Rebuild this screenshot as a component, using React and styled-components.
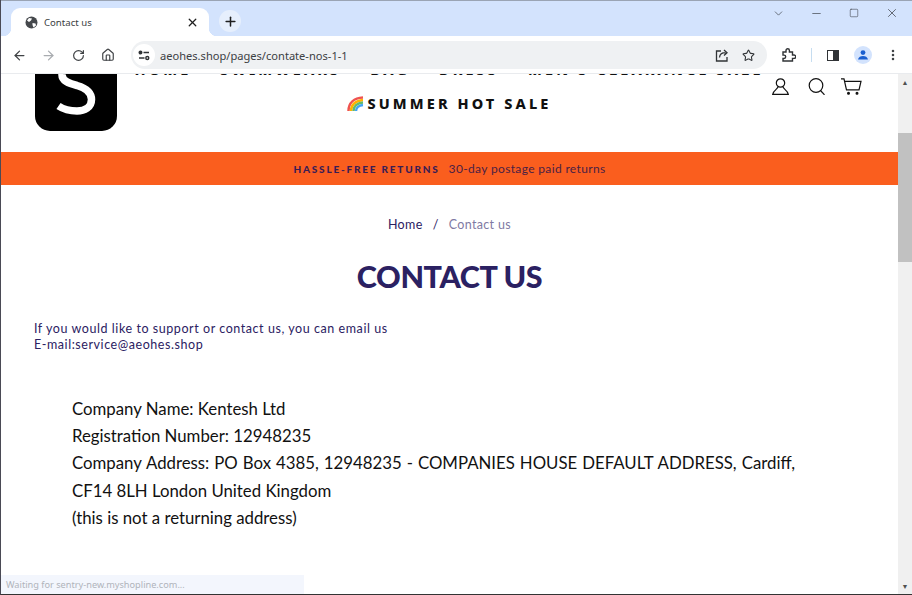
import React from "react"
import styled, { createGlobalStyle } from "styled-components"
import { ArrowLeft, ArrowRight, RotateCw, Home, X, Plus, ChevronDown, Minus, Square, Star, MoreVertical } from "lucide-react"

const ink = "#2b2162"
const siteFont = `Lato, "Noto Sans", sans-serif`

const GlobalStyle = createGlobalStyle`
  html, body {
    margin: 0;
    padding: 0;
    height: 100%;
    overflow: hidden;
    background: #fff;
  }
  #root {
    height: 100%;
  }
`

const Window = styled.div`
  position: relative;
  width: 912px;
  height: 595px;
  box-sizing: border-box;
  display: flex;
  flex-direction: column;
  border-left: 1px solid #4a4a55;
  border-bottom: 1px solid #333;
  overflow: hidden;
  font-family: "Noto Sans", sans-serif;
`

const TitleBar = styled.div`
  height: 36px;
  flex: none;
  display: flex;
  align-items: flex-end;
  background: #d3e3fd;
  border-top: 1px solid #9aa4b4;
  box-sizing: border-box;
  padding-left: 10px;
`

const Tab = styled.div`
  position: relative;
  width: 198px;
  height: 28px;
  box-sizing: border-box;
  background: #fff;
  border-radius: 9px 9px 0 0;
  display: flex;
  align-items: center;
  padding: 0 10px 0 14px;
  font-size: 9.6px;
  color: #3c4043;

  &::before,
  &::after {
    content: "";
    position: absolute;
    bottom: 0;
    width: 8px;
    height: 8px;
  }
  &::before {
    left: -8px;
    background: radial-gradient(circle at 0 0, #d3e3fd 8px, #fff 8.5px);
  }
  &::after {
    right: -8px;
    background: radial-gradient(circle at 100% 0, #d3e3fd 8px, #fff 8.5px);
  }
`

const TabTitle = styled.span`
  flex: 1;
  margin-left: 6px;
`

const NewTab = styled.div`
  width: 22px;
  height: 22px;
  margin: 0 0 4px 10px;
  border-radius: 50%;
  background: #e6effd;
  display: flex;
  align-items: center;
  justify-content: center;
  color: #1f1f1f;
`

const WindowControls = styled.div`
  margin-left: auto;
  align-self: flex-start;
  display: flex;
  align-items: center;
  height: 24px;
  padding-right: 1px;
  color: #3f444b;
`

const WindowButton = styled.div`
  width: 38px;
  display: flex;
  justify-content: center;
`

const Toolbar = styled.div`
  height: 38px;
  flex: none;
  box-sizing: border-box;
  display: flex;
  align-items: center;
  background: #fff;
  border-bottom: 1px solid #e9ebee;
  padding: 1px 0 0 6px;
  color: #444746;
`

const NavIcon = styled.div`
  width: ${(p) => p.$w}px;
  display: flex;
  justify-content: center;
  color: ${(p) => (p.$muted ? "#a9acb0" : "#3f4245")};
`

const Omnibox = styled.div`
  width: 636px;
  height: 28px;
  margin-left: 6px;
  padding: 0 5px 0 2px;
  box-sizing: border-box;
  border-radius: 14px;
  background: #eff1f3;
  display: flex;
  align-items: center;
  color: #3c4043;
`

const SiteInfo = styled.div`
  width: 22px;
  height: 22px;
  margin-right: 5px;
  border-radius: 50%;
  background: #fff;
  display: flex;
  align-items: center;
  justify-content: center;
`

const Url = styled.span`
  flex: 1;
  font-size: 11.1px;
`

const OmniIcon = styled.div`
  width: 27px;
  display: flex;
  justify-content: center;
  color: #303336;
`

const Divider = styled.div`
  width: 1px;
  height: 14px;
  background: #c6ddf0;
  margin-right: 10px;
`

const SidePanelIcon = styled.div`
  width: 12px;
  height: 11px;
  box-sizing: border-box;
  border: 1.5px solid #303336;
  background: linear-gradient(90deg, #fff 50%, #303336 50%);
`

const Avatar = styled.div`
  width: 18px;
  height: 18px;
  border-radius: 50%;
  background: #d3e3fd;
  display: flex;
  align-items: center;
  justify-content: center;
`

const Viewport = styled.div`
  flex: 1;
  min-height: 0;
  display: flex;
`

const Page = styled.main`
  flex: 1;
  min-width: 0;
  overflow: hidden;
  background: #fff;
  font-family: ${siteFont};
  color: ${ink};
`

const Header = styled.header`
  height: 78px;
  display: grid;
  grid-template-columns: 34px 82px 1fr 126px;
  align-items: start;
`

const Logo = styled.div`
  grid-column: 2;
  width: 82px;
  height: 57px;
  background: #000;
  border-radius: 0 0 15px 15px;
  color: #fff;
  display: flex;
  justify-content: center;
`

const Menu = styled.nav`
  grid-column: 3;
  display: flex;
  flex-direction: column;
  align-items: center;
  color: #111;
  font-family: "Noto Sans", sans-serif;
  font-weight: 800;
  font-size: 14.5px;
  letter-spacing: 3.1px;
  margin: -22px 0 0 9px;
`

const MenuRow = styled.div`
  display: flex;
  gap: 29px;
  height: 34px;
  white-space: nowrap;
  align-items: center;
`

const Rainbow = styled.svg`
  margin-right: 4px;
  vertical-align: -2px;
`

const HeaderIcons = styled.div`
  grid-column: 4;
  display: flex;
  gap: 19px;
  margin-top: 4px;
  color: #111;
`

const CartIcon = styled.svg`
  margin-left: -3px;
`

const Banner = styled.div`
  height: 33px;
  background: #fa5e1e;
  display: flex;
  align-items: center;
  justify-content: center;
  font-size: 12px;
  letter-spacing: 0.35px;
  color: #4a2145;
`

const BannerStrong = styled.strong`
  font-size: 10px;
  font-weight: 900;
  letter-spacing: 1.8px;
  margin-right: 9px;
  color: #3a1d55;
`

const Crumbs = styled.div`
  margin-top: 32px;
  text-align: center;
  font-size: 12.5px;
  letter-spacing: 0.35px;
  line-height: 16px;
`

const CrumbSep = styled.span`
  margin: 0 10px;
`

const CrumbCurrent = styled.span`
  color: #7f7aa3;
`

const Title = styled.h1`
  margin: 23px 0 0;
  text-align: center;
  font-size: 30.5px;
  line-height: 40px;
  font-weight: 900;
  letter-spacing: -0.4px;
  color: ${ink};
`

const Intro = styled.p`
  margin: 25px 0 0 33px;
  font-size: 12.5px;
  line-height: 16px;
  letter-spacing: 0.56px;
`

const Company = styled.div`
  margin: 42px 103px 0 71px;
  font-size: 16.8px;
  line-height: 27.2px;
  color: #111;
`

const Justified = styled.div`
  text-align: justify;
`

const ScrollBar = styled.div`
  width: 14px;
  flex: none;
  background: #f0f0f0;
  display: flex;
  flex-direction: column;
  align-items: center;
`

const Arrow = styled.div`
  height: 16px;
  display: flex;
  align-items: center;
  justify-content: center;
  font-size: 7px;
  color: #505050;
`

const Track = styled.div`
  flex: 1;
  width: 100%;
  padding-top: 43px;
`

const Thumb = styled.div`
  height: 129px;
  background: #c1c1c1;
`

const Status = styled.div`
  position: absolute;
  left: 0;
  bottom: 0;
  width: 303px;
  height: 19px;
  background: #f3f6fd;
  padding-left: 5px;
  box-sizing: border-box;
  display: flex;
  align-items: center;
  font-size: 9.2px;
  color: #b0b4bb;
`

const App = () => {
  return (
    <>
      <GlobalStyle />
      <Window>
        <TitleBar>
          <Tab>
            <svg width="13" height="13" viewBox="0 0 13 13">
              <circle cx="6.500" cy="6.500" r="6" fill="#45484c" />
              <path d="M2 4.500l2-2.500 3 .5-1 2-2 1.500zM7.500 7l3 .5.500 2-2.500 2-1-2.500z" fill="#fff" />
            </svg>
            <TabTitle>Contact us</TabTitle>
            <X size={13} color="#1f1f1f" strokeWidth={2.4} />
          </Tab>
          <NewTab>
            <Plus size={15} strokeWidth={2.4} />
          </NewTab>
          <WindowControls>
            <WindowButton>
              <ChevronDown size={13} strokeWidth={1.3} />
            </WindowButton>
            <WindowButton>
              <Minus size={13} strokeWidth={1.3} />
            </WindowButton>
            <WindowButton>
              <Square size={10} strokeWidth={1.4} />
            </WindowButton>
            <WindowButton>
              <X size={14} strokeWidth={1.3} />
            </WindowButton>
          </WindowControls>
        </TitleBar>
        <Toolbar>
          <NavIcon $w={24}>
            <ArrowLeft size={15} />
          </NavIcon>
          <NavIcon $w={34} $muted>
            <ArrowRight size={15} />
          </NavIcon>
          <NavIcon $w={26}>
            <RotateCw size={13} strokeWidth={2.2} />
          </NavIcon>
          <NavIcon $w={34}>
            <Home size={14} />
          </NavIcon>
          <Omnibox>
            <SiteInfo>
              <svg width="12" height="11" viewBox="0 0 12 11" fill="none" stroke="#303336" strokeWidth="1.400">
                <circle cx="2.500" cy="2.500" r="1.300" fill="#303336" />
                <path d="M5.500 2.500H11M1 8h5.500" />
                <circle cx="9.300" cy="8" r="1.500" />
              </svg>
            </SiteInfo>
            <Url>aeohes.shop/pages/contate-nos-1-1</Url>
            <OmniIcon>
              <svg width="14" height="13" viewBox="0 0 14 13" fill="none" stroke="currentColor" strokeWidth="1.300">
                <path d="M6 2H1.500v10H12V8" />
                <path d="M4.500 8.500c.3-3 2.500-4.800 6-4.800M9 1l3 2.700-3 2.700" />
              </svg>
            </OmniIcon>
            <OmniIcon>
              <Star size={13} strokeWidth={2} />
            </OmniIcon>
          </Omnibox>
          <NavIcon $w={44}>
            <svg width="14" height="14" viewBox="0 0 14 14" fill="none" stroke="#303336" strokeWidth="1.400">
              <path d="M1 4h3V2.500a1.700 1.700 0 0 1 3.400 0V4h3.100v3H12a1.700 1.700 0 0 1 0 3.400h-1.500V13H1v-2.500h1a1.700 1.700 0 0 0 0-3.400H1z" />
            </svg>
          </NavIcon>
          <Divider />
          <NavIcon $w={22}>
            <SidePanelIcon />
          </NavIcon>
          <NavIcon $w={38}>
            <Avatar>
              <svg width="12" height="12" viewBox="0 0 12 12">
                <circle cx="6" cy="3.600" r="2.400" fill="#1a5fd0" />
                <path d="M1 10.500c.5-2.600 2.600-3.600 5-3.600s4.500 1 5 3.600z" fill="#1a5fd0" />
              </svg>
            </Avatar>
          </NavIcon>
          <NavIcon $w={22}>
            <MoreVertical size={14} strokeWidth={2.4} />
          </NavIcon>
        </Toolbar>
        <Viewport>
          <Page>
            <Header>
              <Logo>
                <svg width="46" height="46" viewBox="0 0 46 46">
                  <path
                    d="M9 0c-.5 7 7 9.500 15 11.500c9 2.600 14.500 6.500 14.500 14c0 8-7 11.500-14.500 11.500c-6 0-14-2-18.500-5"
                    fill="none"
                    stroke="#fff"
                    strokeWidth="7.500"
                  />
                </svg>
              </Logo>
              <Menu>
                <MenuRow>
                  <span>HOME</span>
                  <span>SWIMWEARS</span>
                  <span>BAG</span>
                  <span>DRESS</span>
                  <span>MEN'S CLEARANCE SALE</span>
                </MenuRow>
                <MenuRow>
                  <span>
                    <Rainbow width="17" height="15" viewBox="0 0 17 15">
                      <path d="M1.500 15C1.500 7 7 2 16 1.500" fill="none" stroke="#ef5350" strokeWidth="2.500" />
                      <path d="M4 15C4 9 8.500 4.500 16 4" fill="none" stroke="#ffb300" strokeWidth="2.500" />
                      <path d="M6.500 15C6.500 10.500 10 7 16 6.500" fill="none" stroke="#66bb6a" strokeWidth="2.500" />
                      <path d="M9 15C9 12 12 9.500 16 9" fill="none" stroke="#42a5f5" strokeWidth="2.500" />
                    </Rainbow>
                    SUMMER HOT SALE
                  </span>
                </MenuRow>
              </Menu>
              <HeaderIcons>
                <svg width="17" height="17" viewBox="0 0 17 17" fill="none" stroke="currentColor" strokeWidth="1.200">
                  <circle cx="8.500" cy="5" r="4.200" />
                  <path d="M6 8.800c0 2-4.500 3.500-5.300 7.500h15.600c-.8-4-5.300-5.500-5.300-7.500" />
                </svg>
                <svg width="17" height="17" viewBox="0 0 17 17" fill="none" stroke="currentColor" strokeWidth="1.200">
                  <circle cx="8" cy="7.500" r="6.800" />
                  <path d="M12.500 12.500l4 4.300" />
                </svg>
                <CartIcon width="21" height="17" viewBox="0 0 21 17" fill="none" stroke="currentColor" strokeWidth="1.200">
                  <path d="M0 .8h3l2.500 11h12.500l2-8.500H3.700" />
                  <circle cx="7.500" cy="15.300" r=".9" fill="currentColor" />
                  <circle cx="16" cy="15.300" r=".9" fill="currentColor" />
                </CartIcon>
              </HeaderIcons>
            </Header>
            <Banner>
              <BannerStrong>HASSLE-FREE RETURNS</BannerStrong>
              30-day postage paid returns
            </Banner>
            <Crumbs>
              Home<CrumbSep>/</CrumbSep>
              <CrumbCurrent>Contact us</CrumbCurrent>
            </Crumbs>
            <Title>CONTACT US</Title>
            <Intro>
              If you would like to support or contact us, you can email us
              <br />
              E-mail:service@aeohes.shop
            </Intro>
            <Company>
              <div>Company Name: Kentesh Ltd</div>
              <div>Registration Number: 12948235</div>
              <Justified>
                Company Address: PO Box 4385, 12948235 - COMPANIES HOUSE DEFAULT ADDRESS, Cardiff, CF14 8LH London United Kingdom
              </Justified>
              <div>(this is not a returning address)</div>
            </Company>
          </Page>
          <ScrollBar>
            <Arrow>▲</Arrow>
            <Track>
              <Thumb />
            </Track>
            <Arrow>▼</Arrow>
          </ScrollBar>
        </Viewport>
        <Status>Waiting for sentry-new.myshopline.com...</Status>
      </Window>
    </>
  )
}

export default App
